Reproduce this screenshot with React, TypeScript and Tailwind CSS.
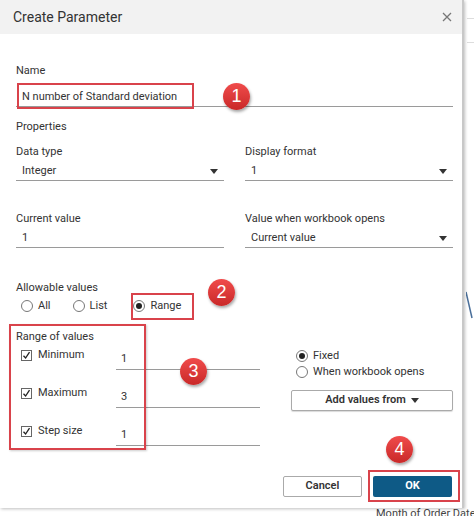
import React from "react";

const font = { fontFamily: 'Roboto, "Liberation Sans", Arial, sans-serif' };

function Caret() {
  return (
    <svg width="8" height="5" viewBox="0 0 8 5" className="shrink-0">
      <path d="M0 0 L8 0 L4 5 Z" fill="#333" />
    </svg>
  );
}

function Radio({ checked, label }: { checked?: boolean; label: string }) {
  return (
    <div className="flex items-center gap-[5px] h-[16px]">
      <span className="w-[12px] h-[12px] rounded-full border border-[#777] bg-white flex items-center justify-center">
        {checked && <span className="w-[6px] h-[6px] rounded-full bg-[#222]" />}
      </span>
      <span className="text-[11px] leading-[16px] text-[#333]">{label}</span>
    </div>
  );
}

function Check({ label }: { label: string }) {
  return (
    <div className="flex items-center gap-[6px] w-[95px]">
      <span className="w-[11px] h-[11px] border border-[#666] bg-white flex items-center justify-center">
        <svg width="9" height="9" viewBox="0 0 9 9">
          <path d="M1.5 4.8 L3.6 7 L7.5 1.2" stroke="#222" strokeWidth="1.3" fill="none" />
        </svg>
      </span>
      <span className="text-[11px] text-[#333]">{label}</span>
    </div>
  );
}

function Badge({ n, className }: { n: string; className: string }) {
  return (
    <div
      className={`absolute w-[27px] h-[27px] rounded-full bg-gradient-to-b from-[#f04b4b] to-[#c92828] shadow-[1px_2px_3px_rgba(0,0,0,0.35)] flex items-center justify-center text-white text-[18px] ${className}`}
      style={{ fontFamily: '"Liberation Sans", Arial, sans-serif' }}
    >
      {n}
    </div>
  );
}

function Field({ children, caret, className = "" }: { children: React.ReactNode; caret?: boolean; className?: string }) {
  return (
    <div className={`h-[22px] border-b border-[#9a9a9a] pl-[6px] pr-[6px] pt-[3px] flex items-center justify-between text-[11px] text-[#333] ${className}`}>
      <span>{children}</span>
      {caret && <Caret />}
    </div>
  );
}

export default function App() {
  return (
    <div className="relative w-[474px] h-[516px] bg-white overflow-hidden" style={font}>
      {/* background fragments */}
      <div className="absolute left-[467px] top-[18px] w-[7px] border-t border-[#ddd]" />
      <div className="absolute left-[467px] top-[42px] w-[7px] border-t border-[#ddd]" />
      <svg className="absolute left-[466px] top-[290px]" width="8" height="30" viewBox="0 0 8 30">
        <path d="M0 2 L6 28" stroke="#4a6f9a" strokeWidth="1.5" fill="none" />
      </svg>
      <div className="absolute left-[376px] top-[507px] text-[11px] leading-[14px] text-[#444] whitespace-nowrap">Month of Order Date</div>

      {/* dialog */}
      <div className="relative w-[464px] h-[508px] bg-white border-r-[2px] border-[#c8c8c8] shadow-[1px_1px_3px_rgba(0,0,0,0.25)] flex flex-col">
        <div className="h-[34px] bg-[#f2f2f2] flex items-center justify-between pl-[13px] pr-[10px]">
          <span className="text-[14px] text-[#333]">Create Parameter</span>
          <svg width="10" height="10" viewBox="0 0 10 10">
            <path d="M1 1 L9 9 M9 1 L1 9" stroke="#777" strokeWidth="1.3" />
          </svg>
        </div>

        <div className="flex flex-col pl-[16px] pr-[9px] pt-[30px]">
          <div className="text-[11px] leading-[14px] text-[#333]">Name</div>
          <Field className="mt-[7px]">N number of Standard deviation</Field>

          <div className="text-[11px] leading-[14px] text-[#333] mt-[13px]">Properties</div>

          <div className="grid grid-cols-2 gap-x-[21px] mt-[11px]">
            <div>
              <div className="text-[11px] leading-[14px] text-[#333]">Data type</div>
              <Field caret>Integer</Field>
            </div>
            <div>
              <div className="text-[11px] leading-[14px] text-[#333]">Display format</div>
              <Field caret>1</Field>
            </div>
            <div className="mt-[31px]">
              <div className="text-[11px] leading-[14px] text-[#333]">Current value</div>
              <Field>1</Field>
            </div>
            <div className="mt-[31px]">
              <div className="text-[11px] leading-[14px] text-[#333]">Value when workbook opens</div>
              <Field caret>Current value</Field>
            </div>
          </div>

          <div className="text-[11px] leading-[14px] text-[#333] mt-[33px]">Allowable values</div>
          <div className="flex items-center h-[18px] mt-[2px] pl-[5px] gap-[22px]">
            <Radio label="All" />
            <Radio label="List" />
            <div className="ml-[4px]">
              <Radio checked label="Range" />
            </div>
          </div>

          <div className="text-[11px] leading-[14px] text-[#333] mt-[15px]">Range of values</div>
          <div className="flex mt-[4px]">
            <div className="flex flex-col w-[244px]">
              {[
                ["Minimum", "1"],
                ["Maximum", "3"],
                ["Step size", "1"],
              ].map(([l, v], i) => (
                <div key={l} className={`flex items-start pl-[5px] ${i > 0 ? "mt-[16px]" : ""}`}>
                  <div className="h-[14px] flex items-center">
                    <Check label={l} />
                  </div>
                  <div className="w-[144px] h-[22px] border-b border-[#9a9a9a] pl-[5px] pt-[3px] text-[11px] text-[#333]">{v}</div>
                </div>
              ))}
            </div>
            <div className="flex flex-col ml-[31px] flex-1">
              <div className="pl-[5px] flex flex-col">
                <Radio checked label="Fixed" />
                <Radio label="When workbook opens" />
              </div>
              <button className="mt-[10px] h-[21px] border border-[#aaa] rounded-[2px] bg-white flex items-center justify-center gap-[5px] text-[11px] font-semibold text-[#333] shadow-[0_1px_1px_rgba(0,0,0,0.15)]">
                Add values from <Caret />
              </button>
            </div>
          </div>

          <div className="flex justify-end gap-[11px] mt-[30px] pr-[1px]">
            <button className="w-[79px] h-[21px] border border-[#aaa] rounded-[2px] bg-white text-[11px] font-semibold text-[#333]">Cancel</button>
            <button className="w-[79px] h-[21px] rounded-[2px] bg-[#0e5a86] text-[11px] font-bold text-white">OK</button>
          </div>
        </div>

        {/* annotation boxes */}
        <div className="absolute left-[17px] top-[83px] w-[177px] h-[26px] border-[2px] border-[#d9434b]" />
        <div className="absolute left-[131px] top-[293px] w-[63px] h-[27px] border-[2px] border-[#d9434b]" />
        <div className="absolute left-[9px] top-[324px] w-[137px] h-[126px] border-[2px] border-[#d9434b] shadow-[1px_1px_2px_rgba(0,0,0,0.2)]" />
        <div className="absolute left-[368px] top-[470px] w-[92px] h-[32px] border-[2px] border-[#d9434b]" />

        <Badge n="1" className="left-[223px] top-[83px]" />
        <Badge n="2" className="left-[208px] top-[279px]" />
        <Badge n="3" className="left-[180px] top-[358px]" />
        <Badge n="4" className="left-[386px] top-[436px]" />
      </div>
    </div>
  );
}
